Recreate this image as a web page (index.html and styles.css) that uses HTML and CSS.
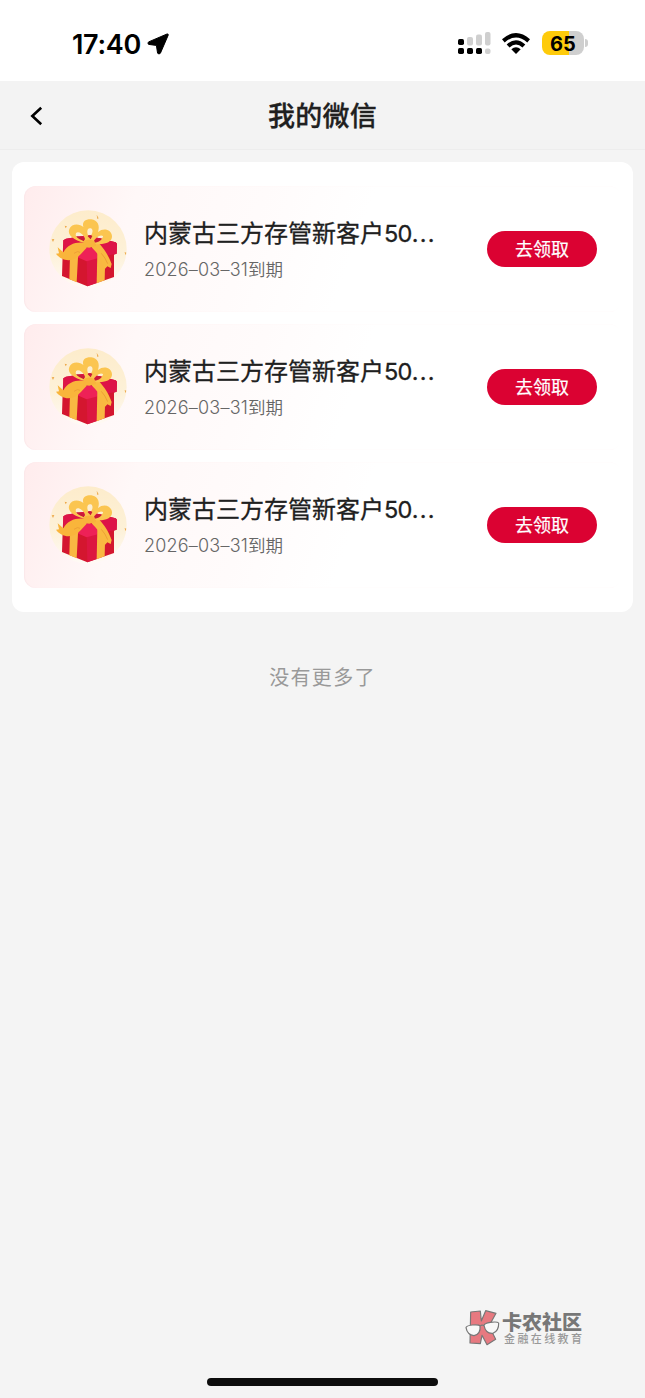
FILE: index.html
```html
<!DOCTYPE html>
<html lang="zh-CN">
<head>
<meta charset="utf-8">
<title>我的微信</title>
<link rel="stylesheet" href="styles.css">
</head>
<body>
<svg class="defs" width="0" height="0" aria-hidden="true">
  <linearGradient id="halo" x1="0" y1="0" x2="0" y2="1"><stop stop-color="#fdeccb"/><stop offset=".55" stop-color="#fdf1d8"/><stop offset="1" stop-color="#fffaf6"/></linearGradient>
  <symbol id="gift" viewBox="0 0 240 240">
    <circle cx="120" cy="123" r="116" fill="url(#halo)"/>
    <path d="M146 20l6 11-4 2zM50 53l7 2-4 6zM11 94l8-1-4 9zM230 132l5 2-3 8z" fill="#eda94c"/>
    <path d="M46 97L54 92 118 82 203 103 207 107 206 137 198 140 198 207 118 235 42 204 44 140z" fill="#d4162f"/>
    <path d="M46 97L54 92 118 82 203 103 207 107 206 137 160 146 116 158 88 144 46 125z" fill="#dd1447"/>
    <path d="M116 155L150 147 147 225 118 235z" fill="#dc1640"/>
    <path d="M88 133L110 116 140 122 154 143 152 150 116 160 88 148z" fill="#ee2157"/>
    <path d="M66 143L96 121 90 148 86 223 64 214z" fill="#f9b842"/>
    <path d="M148 136L172 136 170 217 146 226z" fill="#f9b842"/>
    <path d="M108 104C82 101 58 110 46 133L29 118 33 136 24 137C40 160 76 165 98 139L116 119z" fill="#f9b53b"/>
    <path d="M130 111L153 106C171 126 182 144 191 168L188 180 178 175 170 184C162 165 158 143 132 119z" fill="#f9ba40"/>
    <path fill-rule="evenodd" fill="#fbc550" d="M108 104C80 97 56 82 64 63C71 45 96 47 106 57C101 40 114 33 130 34C149 37 157 53 150 72C168 57 191 66 192 85C193 105 164 112 138 107L124 117zM110 89C103 75 88 69 84 76C79 87 95 94 110 96zM124 88C134 79 137 65 129 61C117 57 114 74 124 88zM138 98C152 98 166 92 165 84C156 78 144 89 138 98z"/>
    <path d="M84 85Q100 84 110 91L108 100Q93 96 84 85zM119 85Q125 78 133 84L128 94zM138 98Q150 88 162 92Q155 102 139 104z" fill="#c91939"/>
    <path d="M107 99Q123 90 139 99L144 114 124 119 107 117z" fill="#f8b43c"/>
    <path d="M78 136Q90 127 96 133M160 136Q172 149 179 167" fill="none" stroke="#eea036" stroke-width="3"/>
  </symbol>
</svg>
<header class="status">
  <div class="status-time">17:40
    <svg width="22" height="22" viewBox="0 0 22 22"><path d="M20 1L1.6 8.9Q.2 10 1.6 11.4L9.4 12.4 10.6 20.2Q12 21.8 13.4 20.2L21.2 2.2Q21.5.5 20 1z" stroke="#000" stroke-width="1"/></svg>
  </div>
  <div class="status-icons">
    <svg class="signal" width="33" height="24" viewBox="0 0 33 24">
      <g fill="#cfcfcf"><rect x="9" y="6" width="6" height="8.5" rx="2"/><rect x="18" y="3.5" width="6" height="11" rx="2"/><rect x="27" y="1" width="5.5" height="13.5" rx="2"/><rect x="27" y="17.5" width="5.5" height="5.5" rx="2"/></g>
      <rect x="0" y="8" width="6" height="6" rx="1.7"/><rect x="0" y="17" width="6" height="6" rx="1.7"/><rect x="9" y="17" width="6" height="6" rx="1.7"/><rect x="18" y="17" width="6" height="6" rx="1.7"/>
    </svg>
    <svg class="wifi" width="28" height="22" viewBox="0 0 28 22">
      <g fill="none" stroke="#000" stroke-width="4.2"><path d="M1.3 7.8Q14-3.4 26.7 7.8"/><path d="M6.1 13Q14 5.8 21.9 13"/></g>
      <path d="M9.3 16.2Q14 12.4 18.7 16.2L14 21z"/>
    </svg>
    <span class="battery">65</span><span class="battery-cap"></span>
  </div>
</header>
<nav class="navbar">
  <svg class="back" width="14" height="20" viewBox="0 0 14 20"><path d="M11.2 1.7L2.3 10l8.9 8.3" fill="none" stroke="#000" stroke-width="2.6"/></svg>
  <h1>我的微信</h1>
</nav>
<main>
  <section class="list">
    <article class="item">
      <svg class="gift" width="80" height="80"><use href="#gift"/></svg>
      <div class="info"><h2>内蒙古三方存管新客户<span class="num">50<span class="dots">...</span></span></h2><p><span class="date">2026–03–31</span>到期</p></div>
      <button>去领取</button>
    </article>
    <article class="item">
      <svg class="gift" width="80" height="80"><use href="#gift"/></svg>
      <div class="info"><h2>内蒙古三方存管新客户<span class="num">50<span class="dots">...</span></span></h2><p><span class="date">2026–03–31</span>到期</p></div>
      <button>去领取</button>
    </article>
    <article class="item">
      <svg class="gift" width="80" height="80"><use href="#gift"/></svg>
      <div class="info"><h2>内蒙古三方存管新客户<span class="num">50<span class="dots">...</span></span></h2><p><span class="date">2026–03–31</span>到期</p></div>
      <button>去领取</button>
    </article>
  </section>
  <p class="end">没有更多了</p>
</main>
<div class="watermark">
  <svg width="36" height="38" viewBox="0 0 108 114">
    <path d="M17 9L46 6 49 36 62 5 93 13 72 51 92 91 66 107 51 79 46 104 15 102z" fill="#e77980" stroke="#777" stroke-width="3.5" stroke-linejoin="round"/>
    <path d="M3 56Q4 50 22 48Q42 46 45 51Q48 75 27 80Q7 78 3 56zM57 49Q58 43 76 40Q97 37 101 42Q102 65 84 73Q62 75 57 49zM45 52Q50 46 57 50" fill="#f8f8f8" stroke="#777" stroke-width="3.5" stroke-linejoin="round"/>
  </svg>
  <div class="brand"><b>卡农社区</b><span>金融在线教育</span></div>
</div>
<div class="home-bar"></div>
</body>
</html>
```
FILE: styles.css
```css
* { box-sizing: border-box; }
body {
  margin: 0;
  height: 1398px;
  position: relative;
  background: #f4f4f4;
  color: #202020;
  font-family: Inter, "Noto Sans CJK SC", sans-serif;
  overflow: hidden;
}
h1, h2, p { margin: 0; }
.defs { position: absolute; }
.status {
  height: 81px;
  padding: 0 57px 0 72px;
  display: flex;
  justify-content: space-between;
  background: #fff;
  color: #000;
}
.status-time {
  display: flex;
  gap: 6px;
  padding-top: 28px;
  font: 600 27px/34px Inter, sans-serif;
  letter-spacing: -.3px;
}
.status-time svg { margin-top: 5px; }
.status-icons { display: flex; align-items: flex-start; padding-top: 31px; }
.wifi { margin: 2px 0 0 11px; }
.battery {
  width: 42px;
  height: 24px;
  margin-left: 12px;
  border-radius: 8px;
  background: linear-gradient(90deg, #fecb0b 65%, #cfcfcf 65%);
  font: 700 20px/26px Inter, sans-serif;
  text-align: center;
}
.battery-cap { width: 3px; height: 8px; margin: 8px 0 0 1px; border-radius: 0 4px 4px 0; background: #cfcfcf; }
.navbar {
  height: 69px;
  display: grid;
  grid-template-columns: 60px 1fr 60px;
  align-items: center;
  background: #f3f3f3;
  border-bottom: 1px solid #ededed;
}
.back { margin: 1px 0 0 30px; }
h1 { padding-top: 3px; text-align: center; font-size: 27px; line-height: 40px; font-weight: 500; letter-spacing: .3px; -webkit-text-stroke: .3px; }
main { padding: 12px 12px 0; }
.list { width: 621px; height: 450px; padding: 24px 12px; border-radius: 12px; background: #fff; display: grid; gap: 12px; }
.item {
  height: 126px;
  padding: 0 24px;
  display: flex;
  align-items: center;
  border-radius: 12px;
  background: linear-gradient(110deg, #ffeced 0%, #fff8f8 18%, #fffbfb 38%, #fff 55%);
  box-shadow: inset 1px 0 1px #fbe8ea;
}
.gift { flex: none; margin-top: -2px; }
.info { width: 300px; margin: 2px 0 0 16px; }
h2 { font-size: 24px; line-height: 36px; font-weight: 400; -webkit-text-stroke: .3px; white-space: nowrap; }
.num { font-size: 23.5px; letter-spacing: -.7px; }
.dots { letter-spacing: 1.2px; }
.info p { margin-top: 3px; font-size: 17.5px; line-height: 30px; font-weight: 350; color: #666; white-space: nowrap; }
.date { font-size: 18px; font-weight: 350; letter-spacing: .2px; }
button {
  width: 110px;
  height: 36px;
  margin-left: auto;
  padding: 0 0 3px;
  border: 0;
  border-radius: 18px;
  background: #db0232;
  color: #fff;
  font: 400 18px/26px "Noto Sans CJK SC", sans-serif;
  -webkit-text-stroke: .2px;
}
.end { margin-top: 51px; text-align: center; font-size: 20px; line-height: 30px; letter-spacing: 1.3px; color: #999; font-weight: 400; }
.watermark { position: absolute; left: 465px; top: 1309px; display: flex; gap: 1px; color: #777; }
.brand { padding-top: 1px; }
.brand b, .brand span { display: block; white-space: nowrap; }
.brand b { font: 900 20px/23px "Noto Sans CJK SC", sans-serif; }
.brand span { margin-left: 2px; font: 500 11px/11px "Noto Sans CJK SC", sans-serif; letter-spacing: 2.4px; color: #999; }
.home-bar { position: absolute; left: 207px; bottom: 12px; width: 231px; height: 8px; border-radius: 4px; background: #0d0d0d; }
```
